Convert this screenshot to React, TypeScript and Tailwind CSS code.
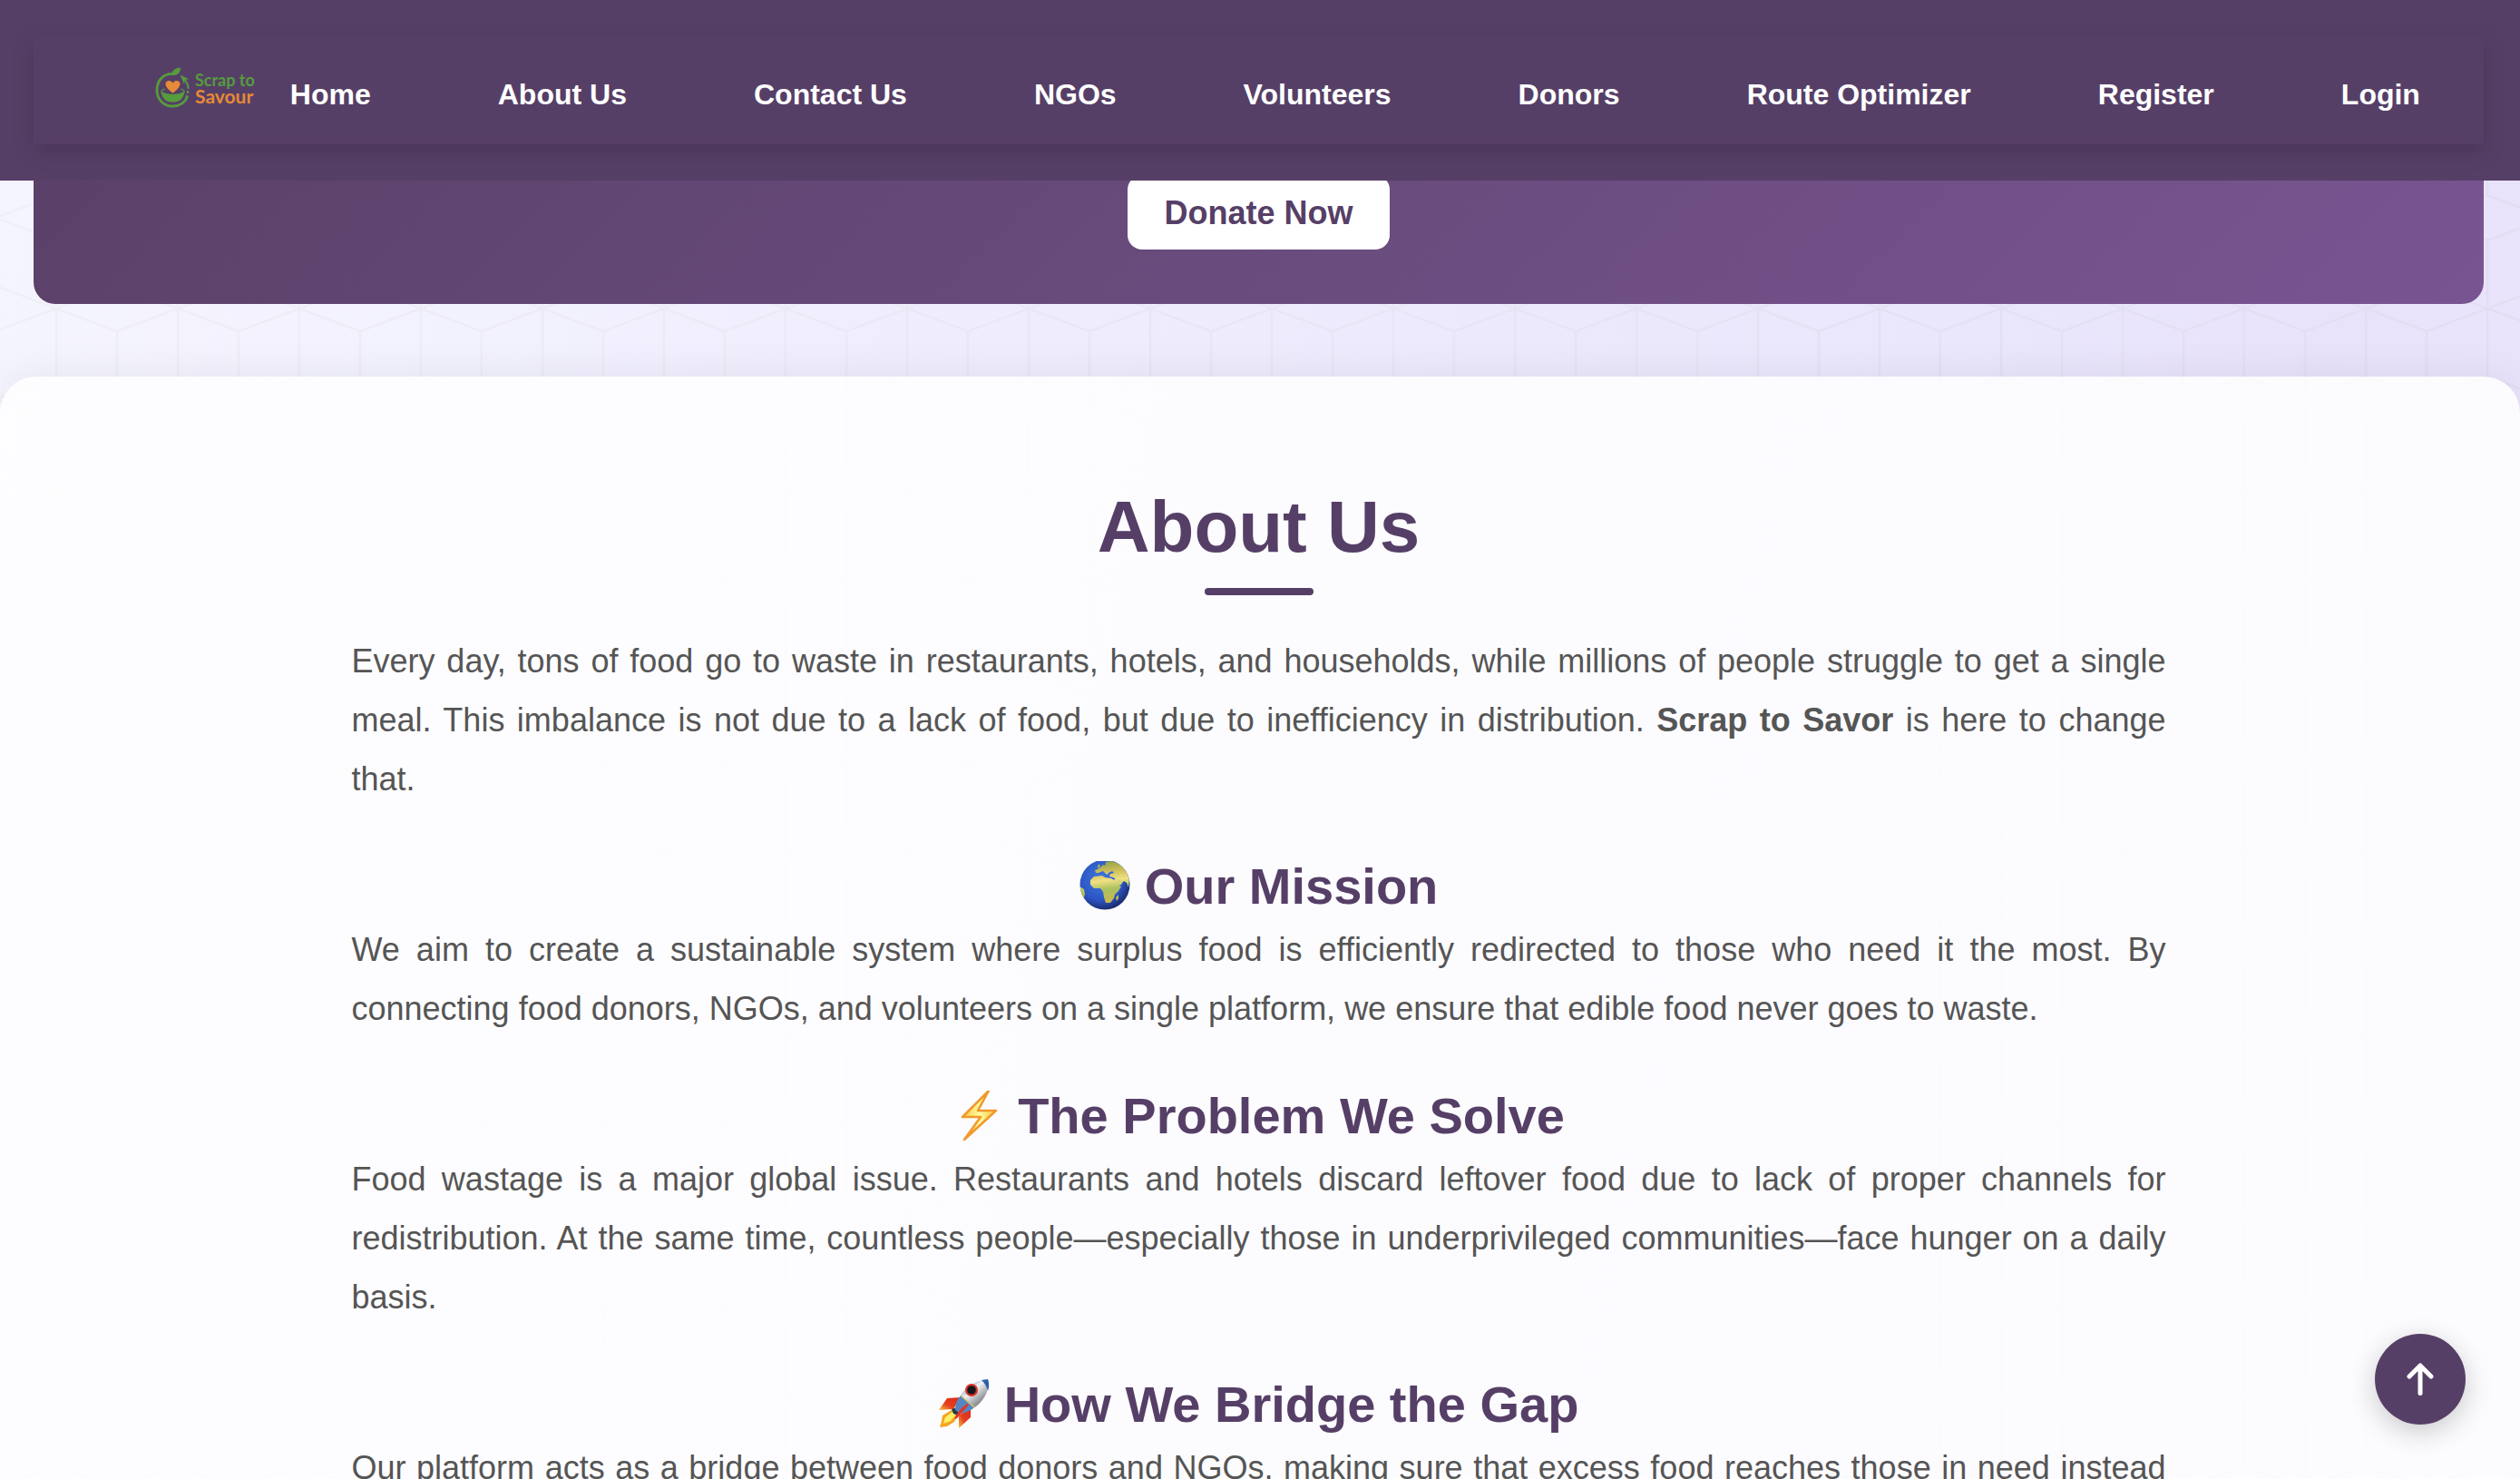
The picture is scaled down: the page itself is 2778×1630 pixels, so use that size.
import React from "react";

const links = ["Home", "About Us", "Contact Us", "NGOs", "Volunteers", "Donors", "Route Optimizer", "Register", "Login"];

function CubePattern() {
  return (
    <svg className="absolute inset-0 h-full w-full" aria-hidden="true">
      <defs>
        <pattern id="cubes" width="134" height="200" x="-5" y="115" patternUnits="userSpaceOnUse">
          <path
            d="M0 0L134 50M134 0L0 50M67 100L0 125L67 150L134 125ZM0 50V200M134 50V200M67 25V100M67 150V200M67 0V25"
            fill="none"
            stroke="#8a8a60"
            strokeOpacity="0.05"
            strokeWidth="2.5"
          />
        </pattern>
      </defs>
      <rect width="100%" height="100%" fill="url(#cubes)" />
    </svg>
  );
}

function Logo() {
  return (
    <a href="#home" aria-label="Scrap to Savour" className="flex items-center gap-1.5">
      <svg viewBox="0 0 38 46" className="h-[46px] w-[38px]" aria-hidden="true">
        <path d="M21 7.5C10 6 2 14 2 25.500C2 36 10 43 19.500 43C27 43 33 39 36 32" fill="none" stroke="#559c3c" strokeWidth="2.800" />
        <path d="M36.500 21V24M36 26V29M35 31L34 33.500" stroke="#559c3c" strokeWidth="2" />
        <path d="M18 9C18 4 22 1 28 0.500C28 6 25 9.500 18 9Z" fill="#559c3c" />
        <path d="M27.500 8.500L37 13L33 14L32 19Z" fill="#559c3c" />
        <path d="M33 14Q36 18 36.500 22" fill="none" stroke="#559c3c" strokeWidth="2" />
        <path d="M6.500 27C8 36 13 38.500 19.500 38.500C26 38.500 31 36 32.500 27C28 31 11 31 6.500 27Z" fill="#559c3c" />
        <path d="M11 24Q6 25.500 7 27.500Q12 30.500 19.500 30.500T32 27.500Q33 25.500 28 24" fill="none" stroke="#559c3c" strokeWidth="1.300" />
        <path d="M19.500 28.500C15 25 11.500 22 11.500 18.500C11.500 14.500 17 13.500 19.500 17.500C22 13.500 27.500 14.500 27.500 18.500C27.500 22 24 25 19.500 28.500Z" fill="#e68a37" />
      </svg>
      <span className="flex flex-col font-['Lato',sans-serif] font-bold">
        <span className="text-[18px] leading-[18px] text-[#559c3c]">Scrap to</span>
        <span className="text-[21px] leading-[18px] text-[#e68a37]">Savour</span>
      </span>
    </a>
  );
}

function Globe() {
  return (
    <svg viewBox="0 0 56 56" className="size-14 shrink-0" aria-hidden="true">
      <defs>
        <radialGradient id="sea" cx="0.42" cy="0.38" r="0.62">
          <stop offset="0" stopColor="#3f77dd" />
          <stop offset="0.7" stopColor="#2b55c4" />
          <stop offset="1" stopColor="#1b2f72" />
        </radialGradient>
        <linearGradient id="land" gradientUnits="userSpaceOnUse" x1="26" y1="0" x2="32" y2="48">
          <stop offset="0" stopColor="#8fa04a" />
          <stop offset="0.25" stopColor="#cdbf5c" />
          <stop offset="0.45" stopColor="#f0e084" />
          <stop offset="0.65" stopColor="#a9c25e" />
          <stop offset="1" stopColor="#cfb552" />
        </linearGradient>
        <clipPath id="disc"><circle cx="28" cy="26" r="27.500" /></clipPath>
      </defs>
      <circle cx="28" cy="26" r="27.500" fill="url(#sea)" />
      <g clipPath="url(#disc)" fill="url(#land)">
        <path d="M18 13L17 10L20 9L23 7L26 4L28 5L29 1L36 0L46 4L52 12L55 20L54 29L52 24L49 22L46 25L43 21L37 18L33 17L34 14L38 13L36 11L32 13L31 15L29 14L26 11L23 12L21 13Z" />
        <path d="M12 21L16 17L25 16L28 18L35 19L40 22L43 27L46 28L43 33L39 37L38 41L34 46L29 46L27 40L26 34L23 30L16 30L12 26Z" />
        <path d="M0 28L5 31L6 36L4 44L0 38ZM40 40L43 37L43 41L41 44ZM20 5L22 3L23 6L20 8Z" />
        <path d="M38 20L41 19L47 25L43 28Z" />
      </g>
    </svg>
  );
}

function Bolt() {
  return (
    <svg viewBox="0 0 56 56" className="size-14 shrink-0" aria-hidden="true">
      <defs>
        <linearGradient id="bolt" x1="0" y1="0" x2="1" y2="0">
          <stop offset="0" stopColor="#fbc53a" />
          <stop offset="0.5" stopColor="#fffba0" />
          <stop offset="1" stopColor="#fbc53a" />
        </linearGradient>
      </defs>
      <path d="M40 0L11 29L31 29L13 54L48 22L28 22Z" fill="url(#bolt)" stroke="#f1982c" strokeWidth="2.500" strokeLinejoin="round" />
    </svg>
  );
}

function RocketIcon() {
  return (
    <svg viewBox="0 0 56 56" className="size-14 shrink-0" aria-hidden="true">
      <defs>
        <linearGradient id="hull" x1="0.2" y1="0.200" x2="0.700" y2="0.800">
          <stop offset="0" stopColor="#7d9cc4" />
          <stop offset="0.4" stopColor="#eef1f3" />
          <stop offset="1" stopColor="#77797c" />
        </linearGradient>
        <linearGradient id="fin" x1="1" y1="0" x2="0" y2="1">
          <stop offset="0" stopColor="#d92b1c" />
          <stop offset="0.600" stopColor="#e6401f" />
          <stop offset="1" stopColor="#fbc23a" />
        </linearGradient>
      </defs>
      <path d="M24 20L9 21L0 34L16 33Z" fill="url(#fin)" />
      <path d="M35 31L35 42L22 54L22 40Z" fill="url(#fin)" />
      <path d="M14 34L4 40L3 46L1 53L9 52L17 47L22 38Z" fill="#f6a521" />
      <path d="M15 36L7 42L5 49L13 46L19 39Z" fill="#fff06a" />
      <path d="M20 31L14 33L16 38L21 40L24 36Z" fill="#263b4c" />
      <path d="M18 33C21 16 34 2 54 0C57 17 43 34 23 38Z" fill="url(#hull)" />
      <path d="M47 1L54 0C56 5 55 10 54 13C53 8 50 4 47 1Z" fill="#2f5fa5" />
      <path d="M24 18C19 24 18 29 18 33L23 38C29 37 34 35 39 31Z" fill="#5685c3" />
      <path d="M24 18L39 31" stroke="#d9c470" strokeWidth="1.500" />
      <circle cx="36" cy="12" r="7" fill="#d93327" />
      <circle cx="36" cy="12" r="4.800" fill="#14181e" />
      <path d="M33 28L20 43L17 44Q21 34 31 27Z" fill="#e23524" />
    </svg>
  );
}

function Block({ icon, title, children }: { icon: React.ReactNode; title: string; children: React.ReactNode }) {
  return (
    <section className="pt-[49px]">
      <h3 className="flex items-center justify-center gap-4 text-[56px] leading-[74px] font-bold text-[#563f67]">
        {icon}
        {title}
      </h3>
      <p className="text-justify text-[36px] leading-[65px] text-[#555]">{children}</p>
    </section>
  );
}

export default function App() {
  return (
    <div className="relative h-screen overflow-hidden bg-linear-[102deg,#f5f5ff_0%,#e8e3fb_85%,#eae2fb_100%] font-['Liberation_Sans',Arial,sans-serif]">
      <CubePattern />
      <header className="relative z-10 bg-[#563f67] pt-[39px] pr-10 pb-10 pl-[37px]">
        <nav className="flex h-[120px] items-center bg-[#563f67] pr-[70px] pl-[134px] shadow-[0_8px_24px_rgba(0,0,0,0.15)]">
          <div className="pb-1"><Logo /></div>
          <ul className="ml-[39px] flex flex-1 justify-between pt-2.5">
            {links.map((label) => (
              <li key={label}>
                <a href={"#" + label.toLowerCase().replace(" ", "-")} className="text-[32px] leading-10 font-bold whitespace-nowrap text-white">
                  {label}
                </a>
              </li>
            ))}
          </ul>
        </nav>
      </header>

      <main className="relative">
        <div className="mr-10 ml-[37px] -mt-2 flex justify-center rounded-b-3xl bg-linear-[135deg,#5b4169_0%,#785591_100%] pt-0.5 pb-[60px]">
          <button type="button" className="h-[82px] rounded-2xl bg-white px-10 pt-0.5 text-[36px] font-bold text-[#563f67]">
            Donate Now
          </button>
        </div>

        <div className="mt-20 flex flex-col items-center rounded-t-[40px] bg-white/85 pt-[120px] pr-[3px] shadow-[0_-8px_40px_rgba(0,0,0,0.05)]">
          <h2 className="text-[80px] leading-[92px] font-bold text-[#563f67]">About Us</h2>
          <div className="mt-[21px] h-2 w-[120px] rounded-full bg-[#563f67]" />
          <div className="mt-10 w-full max-w-[2000px]">
            <p className="text-justify text-[36px] leading-[65px] text-[#555]">
              <span className="block [text-align-last:justify]">
                Every day, tons of food go to waste in restaurants, hotels, and households, while millions of people struggle to get a
                single meal. This imbalance is not due to a lack of food, but due to inefficiency in distribution.{" "}
                <strong>Scrap to Savor</strong> is here to change
              </span>{" "}
              that.
            </p>
            <Block icon={<Globe />} title="Our Mission">
              We aim to create a sustainable system where surplus food is efficiently redirected to those who need it the most. By
              connecting food donors, NGOs, and volunteers on a single platform, we ensure that edible food never goes to waste.
            </Block>
            <Block icon={<Bolt />} title="The Problem We Solve">
              Food wastage is a major global issue. Restaurants and hotels discard leftover food due to lack of proper channels for
              redistribution. At the same time, countless people—especially those in underprivileged communities—face hunger on a daily
              basis.
            </Block>
            <Block icon={<RocketIcon />} title="How We Bridge the Gap">
              Our platform acts as a bridge between food donors and NGOs, making sure that excess food reaches those in need instead of
              going to waste.
            </Block>
          </div>
        </div>
      </main>

      <button
        type="button"
        aria-label="Back to top"
        className="fixed right-[60px] bottom-[60px] z-20 flex size-[100px] items-center justify-center rounded-full bg-[#563f67] shadow-[0_8px_30px_rgba(0,0,0,0.2)]"
      >
        <svg viewBox="0 0 30 36" className="h-9 w-[30px]" aria-hidden="true">
          <path d="M15 33.500V3M3 15L15 3L27 15" fill="none" stroke="white" strokeWidth="5" strokeLinecap="round" strokeLinejoin="round" />
        </svg>
      </button>
    </div>
  );
}
